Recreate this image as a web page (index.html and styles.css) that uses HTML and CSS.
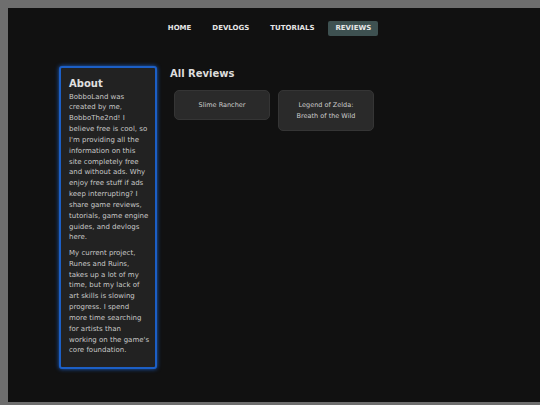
FILE: index.html
```html
<!DOCTYPE html>
<html lang="en">
<head>
<meta charset="utf-8">
<title>BobboLand - Reviews</title>
<link rel="stylesheet" href="styles.css">
</head>
<body>
<div class="page">
  <nav class="nav">
    <a class="nav-link" href="#">HOME</a>
    <a class="nav-link" href="#">DEVLOGS</a>
    <a class="nav-link" href="#">TUTORIALS</a>
    <a class="nav-link active" href="#">REVIEWS</a>
  </nav>
  <div class="content">
    <aside class="about">
      <h2 class="about-title">About</h2>
      <p class="about-text">BobboLand was created by me, BobboThe2nd! I believe free is cool, so I'm providing all the information on this site completely free and without ads. Why enjoy free stuff if ads keep interrupting? I share game reviews, tutorials, game engine guides, and devlogs here.</p>
      <p class="about-text">My current project, Runes and Ruins, takes up a lot of my time, but my lack of art skills is slowing progress. I spend more time searching for artists than working on the game's core foundation.</p>
    </aside>
    <main class="main">
      <h1 class="main-title">All Reviews</h1>
      <div class="cards">
        <a class="card" href="#">Slime Rancher</a>
        <a class="card" href="#">Legend of Zelda: Breath of the Wild</a>
      </div>
    </main>
  </div>
</div>
</body>
</html>
```
FILE: styles.css
```css
html {
  background: #6e6e6e;
  height: 100%;
}
body {
  margin: 8px 0 0 8px;
  font-family: "DejaVu Sans", Verdana, sans-serif;
  color: #cfcfcf;
}
.page {
  background: #111111;
  height: 394px;
  box-shadow: 0 0 10px 1px #000;
}
.nav {
  display: flex;
  justify-content: center;
  gap: 7px;
  padding-top: 13px;
  padding-right: 9px;
}
.nav-link {
  font-size: 7px;
  font-weight: bold;
  line-height: 9px;
  padding: 3px 7px;
  color: #e6e6e6;
  text-decoration: none;
  border-radius: 2px;
}
.nav-link.active {
  background: #3e5151;
}
.content {
  display: flex;
  align-items: flex-start;
  gap: 13px;
  padding-left: 51px;
  margin-top: 30px;
}
.about {
  box-sizing: border-box;
  width: 98px;
  background: #222222;
  border: 2px solid #1c5fc6;
  border-radius: 3px;
  box-shadow: 0 0 4px #1c5fc6;
  padding: 10px 5.7px 6px 8px;
}
.about-title {
  margin: 0 0 1.5px;
  font-size: 10px;
  line-height: 12px;
  font-weight: bold;
  color: #e0e0e0;
}
.about-text {
  margin: 0 0 4.5px;
  font-size: 7px;
  line-height: 10.85px;
  color: #c8c8c8;
}
.main {
  flex: 1;
}
.main-title {
  margin: 2px 0 6px;
  font-size: 10px;
  line-height: 12px;
  font-weight: bold;
  color: #dddddd;
}
.cards {
  display: flex;
  align-items: flex-start;
}
.card {
  box-sizing: border-box;
  width: 96px;
  margin: 4px;
  padding: 8.5px 8px;
  background: #2a2a2a;
  border: 1px solid #353535;
  border-radius: 5px;
  font-size: 6.5px;
  line-height: 11px;
  text-align: center;
  color: #cccccc;
  text-decoration: none;
}
```
